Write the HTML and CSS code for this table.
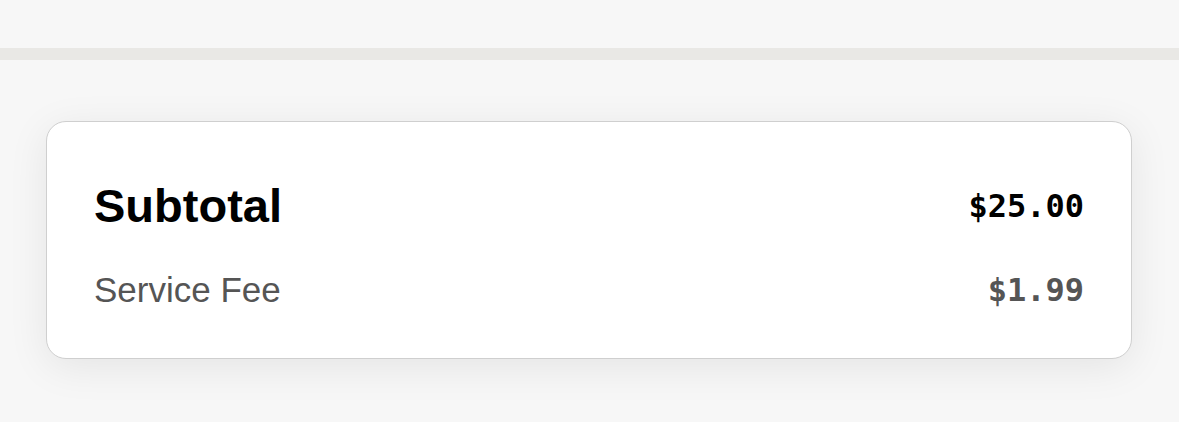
FILE: index.html
```html
<!DOCTYPE html>
<html lang="en">
<head>
    <meta charset="UTF-8">
    <meta name="viewport" content="width=device-width, initial-scale=1.0">
    <title>Order Summary</title>
    <link rel="stylesheet" href="styles.css">
</head>
<body>

    <header class="top-bar"></header>
    <div class="divider"></div>

    <main class="summary">
        <section class="summary-card">
            <div class="summary-row total">
                <span class="label">Subtotal</span>
                <span class="amount">$25.00</span>
            </div>
            <div class="summary-row fee">
                <span class="label">Service Fee</span>
                <span class="amount">$1.99</span>
            </div>
        </section>
    </main>

</body>
</html>
```

FILE: styles.css
```css
body {
    font-family: "Liberation Sans", Arial, sans-serif;
    margin: 0;
    padding: 0;
    background-color: #f7f7f7;
}

.top-bar {
    height: 48px;
    background-color: #f7f7f7;
}

.divider {
    height: 12px;
    background-color: #e9e8e5;
}

.summary {
    padding: 61px 47px 64px 46px;
}

.summary-card {
    background-color: #fff;
    border: 1px solid #cfcfcf;
    border-radius: 20px;
    padding: 56px 47px 46px 47px;
    box-shadow: 0 8px 40px rgba(0, 0, 0, 0.08);
}

.summary-row {
    display: flex;
    justify-content: space-between;
    align-items: center;
}

.amount {
    font-family: "DejaVu Sans Mono", "Liberation Mono", monospace;
    font-weight: bold;
    font-size: 32px;
}

.total {
    line-height: 56px;
    color: #000;
}

.total .label {
    font-size: 47px;
    font-weight: bold;
}

.fee {
    margin-top: 34px;
    line-height: 44px;
    color: #555;
}

.fee .label {
    font-size: 35px;
}
```
